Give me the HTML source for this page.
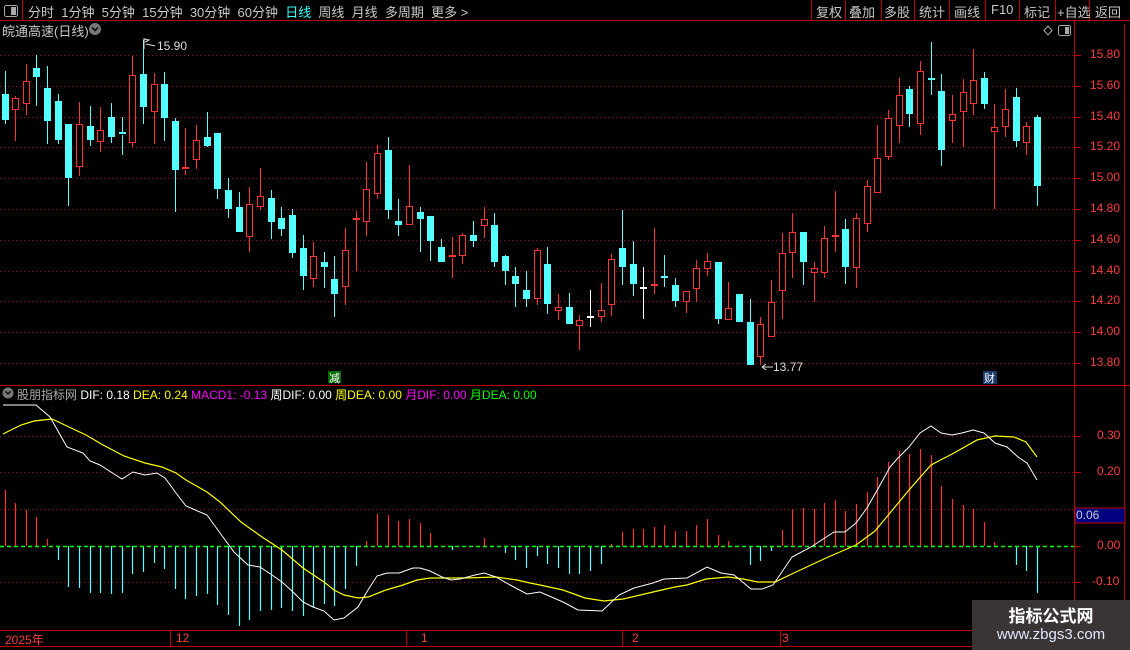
<!DOCTYPE html>
<html><head><meta charset="utf-8"><style>
body{margin:0;background:#000;width:1130px;height:650px;overflow:hidden;font-family:"Liberation Sans","Noto Sans CJK SC",sans-serif;}
#w{position:relative;width:1130px;height:650px;}
.t{position:absolute;white-space:nowrap;}
</style></head><body><div id="w">
<svg id="s" width="1130" height="650" style="position:absolute;left:0;top:0" xmlns="http://www.w3.org/2000/svg">
<g id="grid" stroke="#a01010" stroke-width="1" stroke-dasharray="1,3"></g>
<g id="cand"></g>
<g id="hist"></g>
<line x1="0" y1="546.5" x2="1074" y2="546.5" stroke="#00ff00" stroke-width="1.5" stroke-dasharray="4,3"/>
<polyline fill="none" stroke="#ffff00" stroke-width="1.2" points="3,434 21,425 34,421 52,419 69,427 86,435 103,445 124,456 145,463 162,467 176,473 186,480 207,492 220,502 241,522 262,537 282,550 303,568 324,582 334,590 344,595 358,598 368,597 386,590 403,585 417,580 430,578 465,578 496,577 517,580 530,583 540,585 563,590 585,598 604,601 623,599 653,592 675,587 687,585 706,579 728,577 743,579 758,582 775,582 796,572 826,558 856,545 875,531 890,513 909,490 931,465 954,453 977,440 995,436 1014,437 1026,442 1037,457"/>
<polyline fill="none" stroke="#ffffff" stroke-width="1" points="3,405 36,405 50,417 67,447 83,453 90,461 100,465 114,474 122,479 133,472 145,475 157,473 165,478 176,493 186,506 207,515 220,533 234,552 248,565 260,567 272,575 282,582 293,592 303,602 313,607 324,611 334,620 344,618 358,607 368,590 377,576 387,573 399,573 413,568 420,568 430,571 442,577 451,580 460,579 475,575 484,573 496,577 510,585 527,594 540,592 563,602 578,610 602,611 619,595 634,588 653,583 664,579 687,578 707,567 721,573 734,575 751,589 762,589 773,585 792,557 811,547 834,532 845,532 856,523 867,508 879,487 890,467 898,458 909,447 920,433 931,426 941,433 952,435 962,433 973,430 984,433 995,443 1007,447 1018,457 1027,463 1037,480"/>
<!-- frame lines -->
<line x1="0" y1="20.5" x2="1130" y2="20.5" stroke="#c00000"/>
<line x1="22.5" y1="0" x2="22.5" y2="20" stroke="#c00000"/>
<line x1="0" y1="385.5" x2="1130" y2="385.5" stroke="#c00000"/>
<line x1="1074.5" y1="20" x2="1074.5" y2="630" stroke="#c00000"/>
<line x1="0" y1="630.5" x2="1130" y2="630.5" stroke="#c00000"/>
<line x1="0" y1="646.5" x2="1130" y2="646.5" stroke="#c00000"/>
<g stroke="#c00000"><line x1="811.5" y1="0" x2="811.5" y2="20"/><line x1="845.5" y1="0" x2="845.5" y2="20"/><line x1="881.5" y1="0" x2="881.5" y2="20"/><line x1="914.5" y1="0" x2="914.5" y2="20"/><line x1="949.5" y1="0" x2="949.5" y2="20"/><line x1="985.5" y1="0" x2="985.5" y2="20"/><line x1="1019.5" y1="0" x2="1019.5" y2="20"/><line x1="1055.5" y1="0" x2="1055.5" y2="20"/><line x1="1089.5" y1="0" x2="1089.5" y2="20"/>
<line x1="170.5" y1="630" x2="170.5" y2="646"/><line x1="406.5" y1="630" x2="406.5" y2="646"/><line x1="622.5" y1="630" x2="622.5" y2="646"/><line x1="780.5" y1="630" x2="780.5" y2="646"/>
<line x1="1124.5" y1="24" x2="1124.5" y2="630"/>
</g>
<g id="ticks" stroke="#c00000"></g>
<rect x="4.5" y="5.5" width="13" height="11" rx="2" fill="none" stroke="#aaa"/><rect x="11" y="7" width="5" height="8" fill="#aaa"/>
<rect x="1058.5" y="25.5" width="12" height="10" rx="2" fill="none" stroke="#aaa"/><rect x="1065" y="27" width="4" height="7" fill="#aaa"/>
<path d="M1048 26 L1052 30.5 L1048 35 L1044 30.5Z" fill="none" stroke="#aaa"/>
<circle cx="95" cy="29" r="6" fill="#777"/><path d="M92 27.5 L95 30.5 L98 27.5" stroke="#000" stroke-width="1.5" fill="none"/>
<circle cx="8" cy="393" r="5.5" fill="#777"/><path d="M5.5 391.5 L8 394 L10.5 391.5" stroke="#000" stroke-width="1.3" fill="none"/>
<path d="M144 49 V38 M144 39 L149 40 L145 42 M146 44 L155 46" stroke="#ddd" fill="none"/>
<path d="M773 367 L762 367 M762 367 L766 364 M762 367 L766 370" stroke="#ddd" fill="none"/>
<rect x="1075" y="508" width="50" height="15" fill="#000080" stroke="#c00000"/>
<rect x="972" y="600" width="158" height="50" fill="#3b3434"/>
<rect x="328" y="371" width="13" height="12" fill="#0a6a0a"/>
<rect x="983" y="371" width="14" height="13" fill="#1a3a6a"/>
</svg>
<div class="t" style="left:28px;top:2px;font-size:13px;color:#c8c8c8;word-spacing:0">分时&nbsp; 1分钟&nbsp; 5分钟&nbsp; 15分钟&nbsp; 30分钟&nbsp; 60分钟&nbsp; <span style="color:#3ff">日线</span>&nbsp; 周线&nbsp; 月线&nbsp; 多周期&nbsp; 更多 &gt;</div>
<div class="t" style="left:816px;top:2px;font-size:13px;color:#c8c8c8">复权</div>
<div class="t" style="left:849px;top:2px;font-size:13px;color:#c8c8c8">叠加</div>
<div class="t" style="left:884px;top:2px;font-size:13px;color:#c8c8c8">多股</div>
<div class="t" style="left:919px;top:2px;font-size:13px;color:#c8c8c8">统计</div>
<div class="t" style="left:954px;top:2px;font-size:13px;color:#c8c8c8">画线</div>
<div class="t" style="left:991px;top:2px;font-size:13px;color:#c8c8c8">F10</div>
<div class="t" style="left:1024px;top:2px;font-size:13px;color:#c8c8c8">标记</div>
<div class="t" style="left:1057px;top:2px;font-size:13px;color:#c8c8c8">+自选</div>
<div class="t" style="left:1095px;top:2px;font-size:13px;color:#c8c8c8">返回</div>
<div class="t" style="left:2px;top:21px;font-size:13px;color:#c8c8c8">皖通高速(日线)</div>
<div class="t" style="left:157px;top:39px;font-size:12px;color:#ddd">15.90</div>
<div class="t" style="left:773px;top:360px;font-size:12px;color:#ddd">13.77</div>
<div class="t" style="left:329px;top:370px;font-size:11px;color:#fff">减</div>
<div class="t" style="left:984px;top:370px;font-size:11px;color:#fff">财</div>
<div class="t" style="left:17px;top:386px;font-size:12px;color:#aaa">股朋指标网 <span style="color:#fff">DIF: 0.18</span> <span style="color:#ff0">DEA: 0.24</span> <span style="color:#f0f">MACD1: -0.13</span> <span style="color:#fff">周DIF: 0.00</span> <span style="color:#ff0">周DEA: 0.00</span> <span style="color:#f0f">月DIF: 0.00</span> <span style="color:#0f0">月DEA: 0.00</span></div>
<div id="ax" style="font-size:12px;color:#ff3c3c"></div>
<div class="t" style="left:1076px;top:508px;font-size:12px;color:#ccc">0.06</div>
<div class="t" style="left:5px;top:631px;font-size:12px;color:#ff3c3c">2025年</div>
<div class="t" style="left:176px;top:631px;font-size:12px;color:#ff3c3c">12</div>
<div class="t" style="left:421px;top:631px;font-size:12px;color:#ff3c3c">1</div>
<div class="t" style="left:632px;top:631px;font-size:12px;color:#ff3c3c">2</div>
<div class="t" style="left:782px;top:631px;font-size:12px;color:#ff3c3c">3</div>
<div class="t" style="left:972px;top:602px;width:158px;text-align:center;font-size:17px;font-weight:bold;color:#fff">指标公式网</div>
<div class="t" style="left:972px;top:626px;width:158px;text-align:center;font-size:15px;color:#dfe8ff">www.zbgs3.com</div>
</div>
<script>
var NS="http://www.w3.org/2000/svg";
function el(p,t,a){var e=document.createElementNS(NS,t);for(var k in a)e.setAttribute(k,a[k]);p.appendChild(e);return e;}
var g=document.getElementById('grid');
[55,86,117,147,178,209,240,271,301,332,363,436,472,509,582].forEach(function(y){el(g,'line',{x1:0,y1:y+.5,x2:1074,y2:y+.5});});
var C=[["c",94,120,71,124],["r",98,110,96,141],["r",81,104,64,115],["c",68,77,55,106],["c",88,121,66,144],["c",101,140,94,144],["c",124,178,124,206],["r",124,167,102,176],["c",126,140,106,146],["r",130,142,107,152],["c",117,137,103,143],["c",132,135,117,155],["r",75,143,56,147],["c",74,107,40,124],["r",84,112,73,144],["c",84,118,72,141],["c",121,170,118,212],["r",167,170,128,175],["r",140,160,125,169],["c",137,146,112,147],["c",133,189,133,199],["c",190,209,178,218],["c",207,232,192,232],["r",204,237,187,252],["r",196,207,168,210],["c",198,222,190,239],["c",218,229,207,236],["c",215,253,209,258],["c",248,276,235,290],["r",256,279,242,287],["c",262,267,252,288],["c",279,294,256,317],["r",250,287,228,305],["r",218,220,211,271],["r",189,222,162,236],["r",153,194,145,199],["c",150,210,137,219],["c",221,225,199,236],["r",206,225,165,225],["c",212,219,207,252],["c",216,241,216,261],["c",247,262,239,262],["r",255,258,237,278],["r",235,256,233,264],["c",235,241,221,247],["r",219,226,207,238],["c",225,262,213,267],["c",256,271,255,285],["c",276,284,267,307],["c",290,299,271,307],["r",250,299,248,305],["c",264,304,247,314],["r",307,311,294,320],["c",307,324,293,324],["r",320,326,315,350],["w",316,317,290,327],["r",310,317,283,322],["r",259,305,254,316],["c",248,267,210,285],["c",264,284,241,296],["w",287,288,267,319],["r",284,286,228,294],["c",276,278,255,287],["c",285,301,278,307],["r",291,302,291,313],["r",268,289,260,302],["r",261,269,253,276],["c",262,319,262,324],["r",308,320,282,320],["c",294,322,294,322],["c",322,365,299,365],["r",324,357,317,365],["r",302,337,280,337],["r",253,291,233,319],["r",232,253,213,278],["c",232,262,232,285],["r",268,273,262,302],["r",238,273,226,278],["r",235,237,191,252],["c",229,267,219,284],["r",218,268,213,288],["r",186,224,180,232],["r",158,193,125,193],["r",118,157,110,160],["r",95,126,78,143],["c",89,114,86,127],["r",71,124,61,135],["c",78,80,42,95],["c",91,150,74,166],["r",114,121,95,143],["r",92,112,79,147],["r",80,104,49,115],["c",78,104,72,109],["r",127,132,104,209],["r",109,127,89,137],["c",97,141,88,147],["r",126,143,122,155],["c",117,186,115,206]];
var cg=document.getElementById('cand');
C.forEach(function(d,i){var x=Math.round(4.5+10.645*i);var col=d[0]=="c"?"#54ffff":d[0]=="r"?"#ff3232":"#ffffff";
el(cg,'line',{x1:x+.5,y1:d[3],x2:x+.5,y2:d[1],stroke:col});el(cg,'line',{x1:x+.5,y1:d[2],x2:x+.5,y2:d[4],stroke:col});
var h=d[2]-d[1];
if(h<=3){el(cg,'rect',{x:x-3,y:d[1],width:7,height:2,fill:col});}
else if(d[0]=="c"){el(cg,'rect',{x:x-3,y:d[1],width:7,height:h,fill:col});}
else{el(cg,'rect',{x:x-2.5,y:d[1]+.5,width:6,height:h-1,fill:"#000",stroke:col});}
});
var H=[490,503,510,517,539,560,587,588,593,593,594,593,574,572,563,569,589,599,596,594,605,615,626,620,611,610,608,611,616,607,604,606,589,566,541,514,515,521,519,523,533,546,550,546,546,538,546,553,560,568,556,564,568,574,574,571,564,544,532,529,529,527,525,531,531,525,519,535,541,546,565,561,551,530,509,508,509,503,500,511,504,492,477,462,451,454,449,455,486,499,505,509,522,542,546,565,571,593];
var hg=document.getElementById('hist');
H.forEach(function(y,i){if(y==546)return;var x=Math.round(4.5+10.645*i)+.5;el(hg,'line',{x1:x,y1:546,x2:x,y2:y,stroke:y<546?"#ff3232":"#54ffff","stroke-width":1.2});});
var ax=document.getElementById('ax'),tk=document.getElementById('ticks');
var P=[[55,"15.80"],[86,"15.60"],[117,"15.40"],[147,"15.20"],[178,"15.00"],[209,"14.80"],[240,"14.60"],[271,"14.40"],[301,"14.20"],[332,"14.00"],[363,"13.80"],[436,"0.30"],[472,"0.20"],[546,"0.00"],[582,"-0.10"]];
P.forEach(function(p){var d=document.createElement('div');d.className='t';d.style.left=(p[1].length==4?1097:(p[1].length==5&&p[1][0]=='-'?1092:1090))+'px';d.style.top=(p[0]-8)+'px';d.textContent=p[1];ax.appendChild(d);el(tk,'line',{x1:1074,y1:p[0]+.5,x2:1081,y2:p[0]+.5});});
</script>
</body></html>
